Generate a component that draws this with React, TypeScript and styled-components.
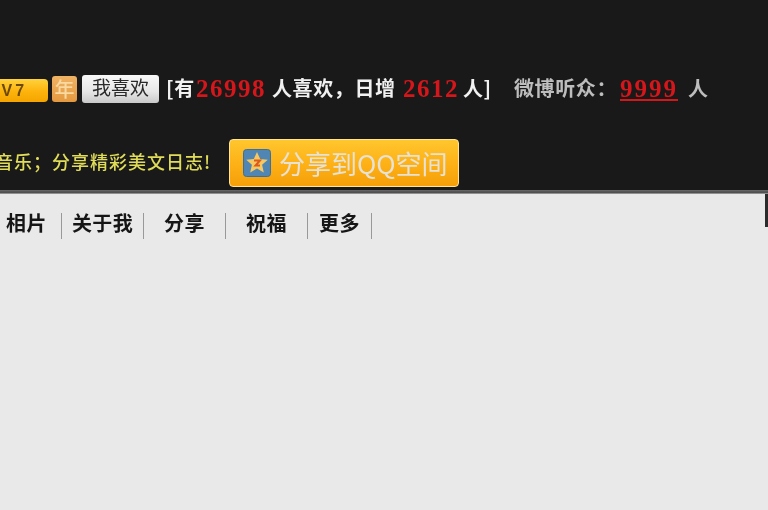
import React from "react";
import styled, { createGlobalStyle } from "styled-components";

const cjk = `"Noto Sans CJK SC", "Liberation Sans", sans-serif`;

const Global = createGlobalStyle`
  html, body { margin: 0; padding: 0; background: #e9e9e9; }
  body { width: 768px; height: 510px; overflow: hidden; font-family: ${cjk}; }
`;

const Page = styled.div`
  width: 768px;
  height: 510px;
  display: flex;
  flex-direction: column;
  overflow: hidden;
  filter: blur(0.45px);
`;

const Header = styled.header`
  height: 190px;
  flex: none;
  box-sizing: border-box;
  background: #191919;
  padding-top: 75px;
  display: flex;
  flex-direction: column;
`;

const StatsRow = styled.div`
  height: 28px;
  display: flex;
  align-items: center;
  margin-left: -20px;
  white-space: nowrap;
`;

const LevelBadge = styled.span`
  width: 68px;
  height: 23px;
  margin-top: 3px;
  box-sizing: border-box;
  padding-left: 10px;
  border-radius: 4px;
  background: linear-gradient(#ffd23c, #fdb30c 55%, #f5a400);
  color: #6b4a08;
  font: bold 16px/23px "Liberation Sans", sans-serif;
  letter-spacing: 3px;
`;

const YearBadge = styled.span`
  width: 25px;
  height: 26px;
  margin-left: 4px;
  border-radius: 3px;
  background: linear-gradient(#efb264, #e4993f);
  color: #f8d9a0;
  font-size: 20px;
  font-weight: 500;
  line-height: 25px;
  text-align: center;
`;

const LikeButton = styled.button`
  width: 77px;
  height: 28px;
  margin-left: 5px;
  padding: 0 0 4px;
  border: 0;
  border-radius: 3px;
  background: linear-gradient(#f8f8f8, #e6e6e6 60%, #c9c9c9);
  color: #2a2a2a;
  font-family: ${cjk};
  font-size: 19px;
  line-height: 24px;
`;

const Stat = styled.span<{ $left?: number; $width: number; $tone?: "white" | "grey" }>`
  margin-left: ${(p) => p.$left ?? 0}px;
  width: ${(p) => p.$width}px;
  flex: none;
  color: ${(p) => (p.$tone === "grey" ? "#bdbdbd" : "#f1f1f1")};
  font-size: 20px;
  font-weight: 700;
  line-height: 26px;
  letter-spacing: 0.6px;
  margin-bottom: 2px;
`;

const Count = styled.span<{ $width: number; $link?: boolean }>`
  width: ${(p) => p.$width}px;
  flex: none;
  color: #d5161b;
  font: 700 25px/28px "Liberation Serif", serif;
  letter-spacing: ${(p) => (p.$link ? 2 : 1.5)}px;
  text-decoration: ${(p) => (p.$link ? "underline" : "none")};
`;

const ShareRow = styled.div`
  height: 49px;
  margin-top: 35px;
  margin-left: -5px;
  display: flex;
  align-items: center;
  white-space: nowrap;
`;

const Slogan = styled.span`
  width: 234px;
  flex: none;
  margin-top: -3px;
  color: #e0dc58;
  font-size: 18px;
  font-weight: 500;
  line-height: 24px;
  letter-spacing: 1px;
`;

const ShareButton = styled.button`
  width: 230px;
  height: 48px;
  flex: none;
  display: flex;
  align-items: center;
  gap: 8px;
  box-sizing: border-box;
  padding: 0 0 0 13px;
  border: 1px solid #ffe39a;
  border-radius: 4px;
  background: linear-gradient(#ffc62e, #fdb015 55%, #f59f08);
  color: #e6e2d6;
  font-family: ${cjk};
  font-size: 26px;
  line-height: 46px;
  white-space: nowrap;
`;

const Divider = styled.div`
  height: 4px;
  flex: none;
  background: linear-gradient(#6b6b6b, #4a4a4a 60%, #b0b0b0);
`;

const Content = styled.main`
  flex: 1;
  position: relative;
  background: #e9e9e9;
`;

const Notch = styled.div`
  position: absolute;
  top: 0;
  right: 0;
  width: 3px;
  height: 33px;
  background: #2b2b2b;
`;

const Nav = styled.nav`
  display: flex;
  height: 26px;
  margin-top: 19px;
`;

const NavItem = styled.a<{ $width: number; $inset?: number }>`
  width: ${(p) => p.$width}px;
  height: 26px;
  box-sizing: border-box;
  flex: none;
  padding-right: ${(p) => p.$inset ?? 0}px;
  border-right: 1.5px solid #999;
  color: #161616;
  font-size: 20px;
  font-weight: 700;
  line-height: 19px;
  letter-spacing: 0.4px;
  text-align: center;
`;

const StarIcon = () => (
  <svg width="28" height="28" viewBox="0 0 28 28" aria-hidden="true" style={{ flex: "none" }}>
    <rect x="0.5" y="0.5" width="27" height="27" rx="3" fill="#4f86b4" stroke="#3f6f98" />
    <path d="M14 3l3.2 7 7.6.8-5.7 5 1.7 7.6L14 19.5l-6.8 3.9 1.7-7.6-5.7-5 7.6-.8z" fill="#f7c860" />
    <path d="M11 11.5h6l-4.5 5H17" fill="none" stroke="#dd5a1c" strokeWidth="2" />
  </svg>
);

export default function App() {
  return (
    <Page>
      <Global />
      <Header>
        <StatsRow>
          <LevelBadge>LV7</LevelBadge>
          <YearBadge>年</YearBadge>
          <LikeButton>我喜欢</LikeButton>
          <Stat $left={7} $width={30}>[有</Stat>
          <Count $width={76}>26998</Count>
          <Stat $width={131}>人喜欢，日增</Stat>
          <Count $width={60}>2612</Count>
          <Stat $width={51}>人]</Stat>
          <Stat $width={106} $tone="grey">微博听众：</Stat>
          <Count $width={68} $link>9999</Count>
          <Stat $width={30} $tone="grey">人</Stat>
        </StatsRow>
        <ShareRow>
          <Slogan>音乐；分享精彩美文日志!</Slogan>
          <ShareButton>
            <StarIcon />
            分享到QQ空间
          </ShareButton>
        </ShareRow>
      </Header>
      <Divider />
      <Content>
        <Notch />
        <Nav>
          <NavItem $width={62} $inset={8}>相片</NavItem>
          <NavItem $width={82}>关于我</NavItem>
          <NavItem $width={82}>分享</NavItem>
          <NavItem $width={82}>祝福</NavItem>
          <NavItem $width={64}>更多</NavItem>
        </Nav>
      </Content>
    </Page>
  );
}
